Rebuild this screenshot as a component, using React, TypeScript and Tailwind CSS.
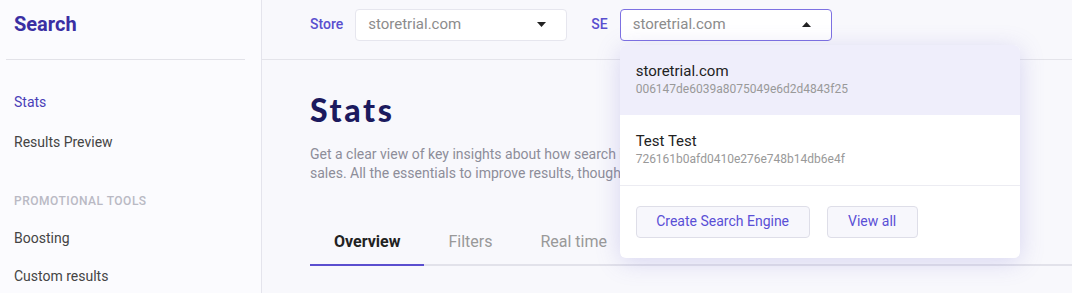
const font = { fontFamily: "Roboto, 'Liberation Sans', sans-serif" };

function Caret({ up }: { up?: boolean }) {
  return (
    <svg width="9" height="5" viewBox="0 0 9 5" className="shrink-0">
      {up ? <path d="M0 5 L4.5 0 L9 5 Z" fill="#222" /> : <path d="M0 0 L4.5 5 L9 0 Z" fill="#222" />}
    </svg>
  );
}

function Sidebar() {
  return (
    <aside className="flex w-[262px] shrink-0 flex-col border-r border-[#e4e4ec] bg-[#fbfbfe]">
      <div className="flex h-[59px] shrink-0 items-center pl-[14px] pb-[11px] text-[20px] font-bold text-[#3a2fa3]">Search</div>
      <div className="ml-[6px] h-px w-[239px] shrink-0 bg-[#e2e2e8]" />
      <nav className="flex shrink-0 flex-col pl-[14px] pt-[22px] text-[14px]">
        <a className="py-[10px] text-[#4a3eb8]">Stats</a>
        <a className="pt-[9px] pb-[10px] text-[#444]">Results Preview</a>
        <div className="pt-[29px] pb-[10px] text-[12px] font-medium tracking-[0.5px] text-[#b9b9c4]">PROMOTIONAL TOOLS</div>
        <a className="pt-[8px] pb-[9px] text-[#444]">Boosting</a>
        <a className="py-[8px] text-[#444]">Custom results</a>
      </nav>
    </aside>
  );
}

const engines = [
  { name: "storetrial.com", id: "006147de6039a8075049e6d2d4843f25", active: true },
  { name: "Test Test", id: "726161b0afd0410e276e748b14db6e4f", active: false },
];

function EngineMenu() {
  return (
    <div className="absolute left-0 top-[36px] z-10 w-[400px] overflow-hidden rounded-[6px] bg-white shadow-[0_4px_24px_rgba(100,90,200,0.22)]">
      {engines.map((e) => (
        <div key={e.id} className={`flex h-[70px] flex-col justify-center px-4 ${e.active ? "bg-[#efeefb]" : "bg-white"}`}>
          <div className="text-[15px] leading-[20px] text-[#222]">{e.name}</div>
          <div className="text-[12px] leading-[17px] text-[#999]">{e.id}</div>
        </div>
      ))}
      <div className="flex gap-[17px] border-t border-[#ececf2] px-4 py-5">
        <button className="h-[32px] w-[174px] rounded-[4px] border border-[#dedee8] bg-[#f7f7fc] text-[14px] text-[#5a4fd6]">
          Create Search Engine
        </button>
        <button className="h-[32px] w-[91px] rounded-[4px] border border-[#dedee8] bg-[#f7f7fc] text-[14px] text-[#5a4fd6]">
          View all
        </button>
      </div>
    </div>
  );
}

function Header() {
  return (
    <header className="flex h-[60px] shrink-0 items-center border-b border-[#e4e4ea] pl-12 pb-[10px] text-[14px]">
      <span className="mr-3 font-medium text-[#5a4fcf]">Store</span>
      <div className="flex h-[32px] w-[212px] items-center justify-between rounded-[4px] border border-[#e6e6ee] bg-white pl-3 pr-[20px]">
        <span className="text-[15px] text-[#8c8c8c]">storetrial.com</span>
        <Caret />
      </div>
      <span className="ml-[24px] mr-3 font-medium text-[#5a4fcf]">SE</span>
      <div className="relative">
        <div className="flex h-[32px] w-[212px] items-center justify-between rounded-[4px] border border-[#7d71e2] bg-white pl-3 pr-[20px]">
          <span className="text-[15px] text-[#8c8c8c]">storetrial.com</span>
          <Caret up />
        </div>
        <EngineMenu />
      </div>
    </header>
  );
}

export default function App() {
  return (
    <div className="flex h-[293px] w-[1072px] overflow-hidden bg-[#f8f8fc]" style={font}>
      <Sidebar />
      <main className="flex flex-1 flex-col">
        <Header />
        <div className="pl-12 pt-[30px]">
          <h1 className="text-[32px] font-black leading-[40px] tracking-[2.6px] text-[#1c1a5e]" style={{ fontFamily: "Lato, sans-serif" }}>
            Stats
          </h1>
          <p className="mt-[15px] text-[14px] leading-[19px] text-[#8d8d99]">
            Get a clear view of key insights about how search is performing and how it affects your
            <br />
            sales. All the essentials to improve results, thoughtfully gathered in one place.
          </p>
          <div className="mt-[47px] flex border-b-2 border-[#e2e2ea] text-[16px]">
            <div className="-mb-[2px] border-b-2 border-[#5b4fcf] px-6 pb-[10px] font-bold text-[#222]">Overview</div>
            <div className="px-6 pb-[10px] text-[#999]">Filters</div>
            <div className="px-6 pb-[10px] text-[#999]">Real time</div>
          </div>
        </div>
      </main>
    </div>
  );
}
